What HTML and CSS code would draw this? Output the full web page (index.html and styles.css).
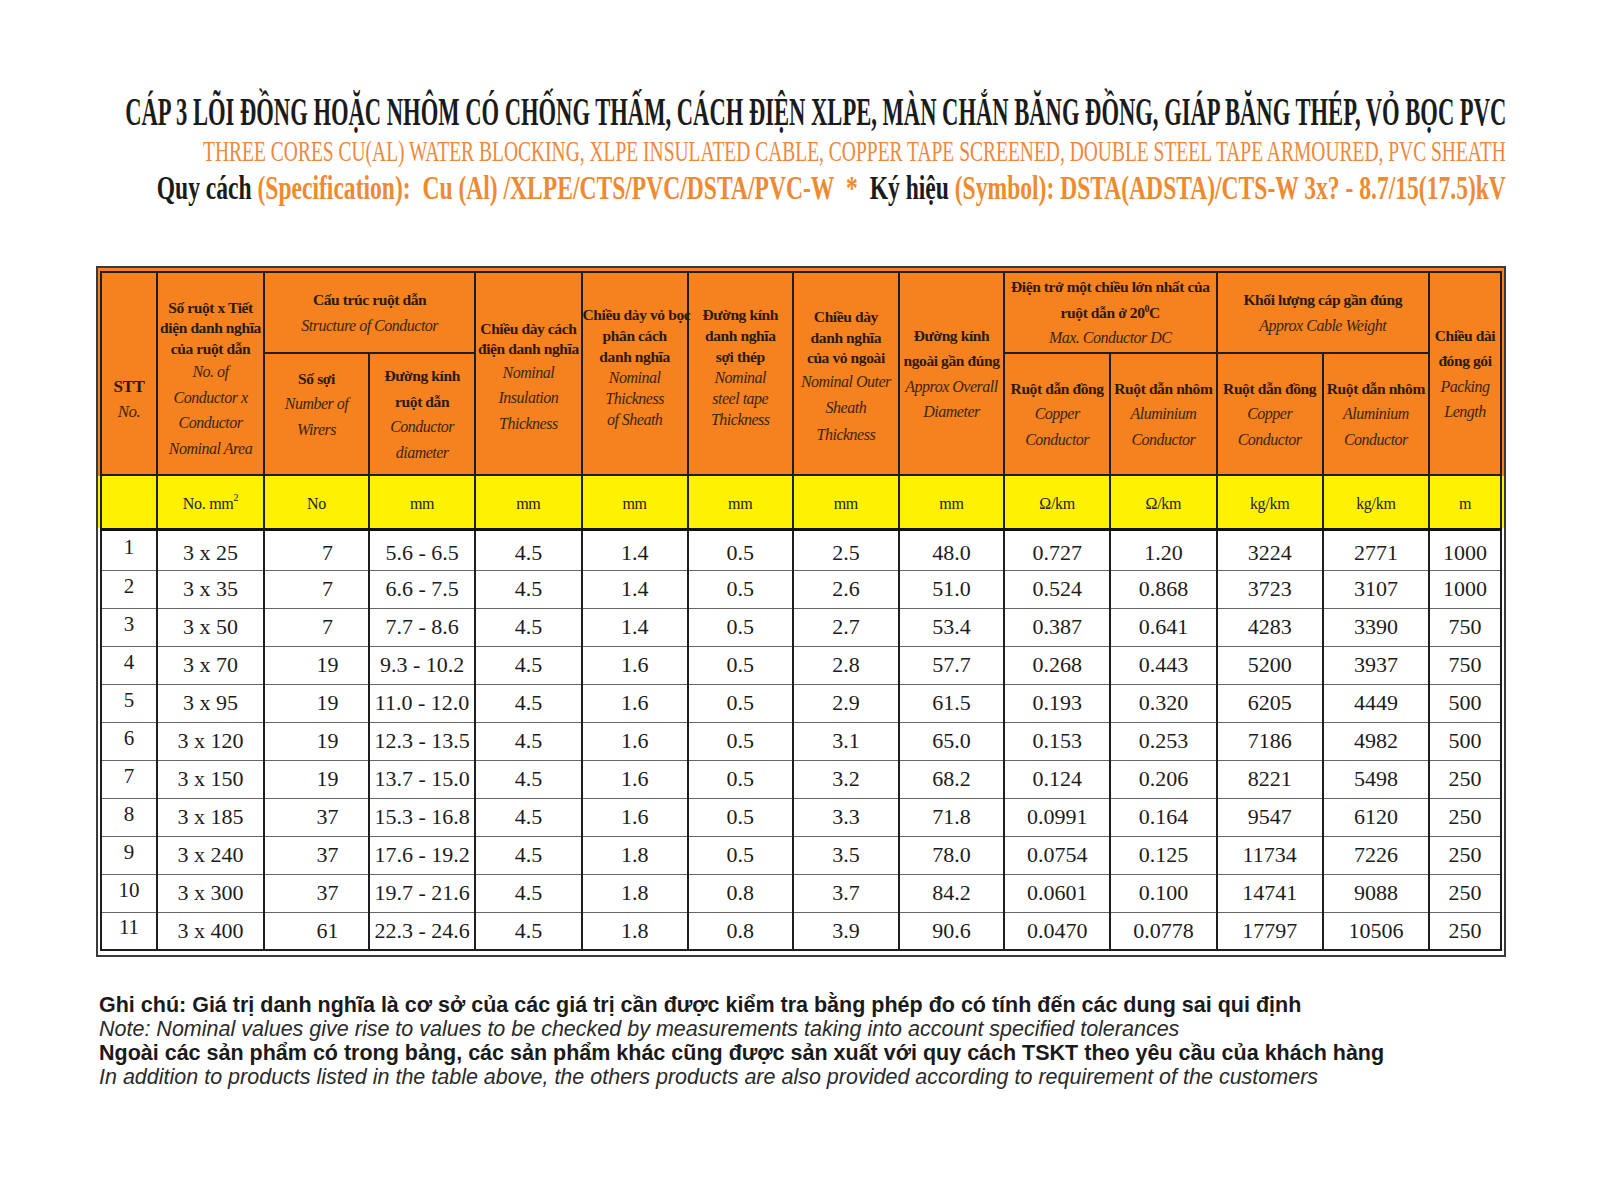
FILE: index.html
```html
<!DOCTYPE html>
<html lang="vi">
<head>
<meta charset="utf-8">
<title>Cáp 3 lõi DSTA/CTS-W</title>
<link rel="stylesheet" href="styles.css">
</head>
<body>
<div class="page">
  <header class="titles">
    <div class="tline t1"><span>CÁP 3 LÕI ĐỒNG HOẶC NHÔM CÓ CHỐNG THẤM, CÁCH ĐIỆN XLPE, MÀN CHẮN BĂNG ĐỒNG, GIÁP BĂNG THÉP, VỎ BỌC PVC</span></div>
    <div class="tline t2"><span>THREE CORES CU(AL) WATER BLOCKING, XLPE INSULATED CABLE, COPPER TAPE SCREENED, DOUBLE STEEL TAPE ARMOURED, PVC SHEATH</span></div>
    <div class="tline t3"><span>Quy cách <em>(Specification):&nbsp; Cu (Al) /XLPE/CTS/PVC/DSTA/PVC-W&nbsp; *&nbsp;</em> Ký hiệu <em>(Symbol): DSTA(ADSTA)/CTS-W 3x? - 8.7/15(17.5)kV</em></span></div>
  </header>

  <div class="frame">
    <table class="spec">
      <colgroup>
        <col class="c-stt"><col class="c-w107"><col class="c-w105"><col><col><col><col class="c-w105"><col><col class="c-w105"><col><col><col><col><col class="c-last">
      </colgroup>
      <thead>
        <tr class="h1">
          <th rowspan="2" class="stt"><b>STT</b><i>No.</i></th>
          <th rowspan="2" class="cb down12"><b>Số ruột x Tiết<br>diện danh nghĩa<br>của ruột dẫn</b><i>No. of<br>Conductor x<br>Conductor<br>Nominal Area</i></th>
          <th colspan="2"><b>Cấu trúc ruột dẫn</b><i>Structure of Conductor</i></th>
          <th rowspan="2" class="cb down8"><b>Chiều dày cách<br>điện danh nghĩa</b><i>Nominal<br>Insulation<br>Thickness</i></th>
          <th rowspan="2" class="tight"><b>Chiều dày vỏ bọc<br>phân cách<br>danh nghĩa</b><i>Nominal<br>Thickness<br>of Sheath</i></th>
          <th rowspan="2" class="tight"><b>Đường kính<br>danh nghĩa<br>sợi thép</b><i>Nominal<br>steel tape<br>Thickness</i></th>
          <th rowspan="2" class="cb wide down8"><b>Chiều dày<br>danh nghĩa<br>của vỏ ngoài</b><i>Nominal Outer<br>Sheath<br>Thickness</i></th>
          <th rowspan="2"><b>Đường kính<br>ngoài gần đúng</b><i>Approx Overall<br>Diameter</i></th>
          <th colspan="2"><b>Điện trở một chiều lớn nhất của<br>ruột dẫn ở 20<sup>0</sup>C</b><i>Max. Conductor DC</i></th>
          <th colspan="2"><b>Khối lượng cáp gần đúng</b><i>Approx Cable Weight</i></th>
          <th rowspan="2"><b>Chiều dài<br>đóng gói</b><i>Packing<br>Length</i></th>
        </tr>
        <tr class="h2">
          <th class="raise"><b>Số sợi</b><i>Number of<br>Wirers</i></th>
          <th><b>Đường kính<br>ruột dẫn</b><i>Conductor<br>diameter</i></th>
          <th><b>Ruột dẫn đồng</b><i>Copper<br>Conductor</i></th>
          <th><b>Ruột dẫn nhôm</b><i>Aluminium<br>Conductor</i></th>
          <th><b>Ruột dẫn đồng</b><i>Copper<br>Conductor</i></th>
          <th><b>Ruột dẫn nhôm</b><i>Aluminium<br>Conductor</i></th>
        </tr>
        <tr class="units">
          <td></td><td>No. mm<sup>2</sup></td><td>No</td><td>mm</td><td>mm</td><td>mm</td><td>mm</td><td>mm</td><td>mm</td><td>Ω/km</td><td>Ω/km</td><td>kg/km</td><td>kg/km</td><td>m</td>
        </tr>
      </thead>
      <tbody>
        <tr class="first"><td class="n">1</td><td>3 x 25</td><td class="w">7</td><td>5.6 - 6.5</td><td>4.5</td><td>1.4</td><td>0.5</td><td>2.5</td><td>48.0</td><td>0.727</td><td>1.20</td><td>3224</td><td>2771</td><td>1000</td></tr>
        <tr><td class="n">2</td><td>3 x 35</td><td class="w">7</td><td>6.6 - 7.5</td><td>4.5</td><td>1.4</td><td>0.5</td><td>2.6</td><td>51.0</td><td>0.524</td><td>0.868</td><td>3723</td><td>3107</td><td>1000</td></tr>
        <tr><td class="n">3</td><td>3 x 50</td><td class="w">7</td><td>7.7 - 8.6</td><td>4.5</td><td>1.4</td><td>0.5</td><td>2.7</td><td>53.4</td><td>0.387</td><td>0.641</td><td>4283</td><td>3390</td><td>750</td></tr>
        <tr><td class="n">4</td><td>3 x 70</td><td class="w">19</td><td>9.3 - 10.2</td><td>4.5</td><td>1.6</td><td>0.5</td><td>2.8</td><td>57.7</td><td>0.268</td><td>0.443</td><td>5200</td><td>3937</td><td>750</td></tr>
        <tr><td class="n">5</td><td>3 x 95</td><td class="w">19</td><td>11.0 - 12.0</td><td>4.5</td><td>1.6</td><td>0.5</td><td>2.9</td><td>61.5</td><td>0.193</td><td>0.320</td><td>6205</td><td>4449</td><td>500</td></tr>
        <tr><td class="n">6</td><td>3 x 120</td><td class="w">19</td><td>12.3 - 13.5</td><td>4.5</td><td>1.6</td><td>0.5</td><td>3.1</td><td>65.0</td><td>0.153</td><td>0.253</td><td>7186</td><td>4982</td><td>500</td></tr>
        <tr><td class="n">7</td><td>3 x 150</td><td class="w">19</td><td>13.7 - 15.0</td><td>4.5</td><td>1.6</td><td>0.5</td><td>3.2</td><td>68.2</td><td>0.124</td><td>0.206</td><td>8221</td><td>5498</td><td>250</td></tr>
        <tr><td class="n">8</td><td>3 x 185</td><td class="w">37</td><td>15.3 - 16.8</td><td>4.5</td><td>1.6</td><td>0.5</td><td>3.3</td><td>71.8</td><td>0.0991</td><td>0.164</td><td>9547</td><td>6120</td><td>250</td></tr>
        <tr><td class="n">9</td><td>3 x 240</td><td class="w">37</td><td>17.6 - 19.2</td><td>4.5</td><td>1.8</td><td>0.5</td><td>3.5</td><td>78.0</td><td>0.0754</td><td>0.125</td><td>11734</td><td>7226</td><td>250</td></tr>
        <tr><td class="n">10</td><td>3 x 300</td><td class="w">37</td><td>19.7 - 21.6</td><td>4.5</td><td>1.8</td><td>0.8</td><td>3.7</td><td>84.2</td><td>0.0601</td><td>0.100</td><td>14741</td><td>9088</td><td>250</td></tr>
        <tr><td class="n">11</td><td>3 x 400</td><td class="w">61</td><td>22.3 - 24.6</td><td>4.5</td><td>1.8</td><td>0.8</td><td>3.9</td><td>90.6</td><td>0.0470</td><td>0.0778</td><td>17797</td><td>10506</td><td>250</td></tr>
      </tbody>
    </table>
  </div>

  <footer class="notes">
    <p class="vi">Ghi chú: Giá trị danh nghĩa là cơ sở của các giá trị cần được kiểm tra bằng phép đo có tính đến các dung sai qui định</p>
    <p class="en">Note: Nominal values give rise to values to be checked by measurements taking into account specified tolerances</p>
    <p class="vi">Ngoài các sản phẩm có trong bảng, các sản phẩm khác cũng được sản xuất với quy cách TSKT theo yêu cầu của khách hàng</p>
    <p class="en">In addition to products listed in the table above, the others products are also provided according to requirement of the customers</p>
  </footer>
</div>
</body>
</html>
```
FILE: styles.css
```css
* { box-sizing: border-box; }
html, body { margin: 0; padding: 0; background: #fff; }
body { font-family: "Liberation Serif", "Times New Roman", serif; color: #1a1a1a; }

.page { width: 1600px; }

/* ---------- titles ---------- */
.titles { padding-top: 90px; width: 1506px; }
.tline { display: flex; justify-content: flex-end; white-space: nowrap; }
.tline span { flex: none; display: block; transform-origin: right center; }
.t1 { font-size: 39px; line-height: 44px; font-weight: 700; color: #1b1b1b; }
.t1 span { transform: scaleX(0.579); }
.t2 { font-size: 29.5px; line-height: 34px; font-weight: 400; color: #f0873a; }
.t2 span { transform: scaleX(0.661); }
.t3 { font-size: 34px; line-height: 39px; font-weight: 700; color: #1b1b1b; }
.t3 span { transform: scaleX(0.693); }
.t3 em { font-style: normal; color: #ef8a30; }

/* ---------- table frame ---------- */
.frame {
  margin: 59px 0 0 96px;
  width: 1410px;
  border: 2px solid #3a3a3a;
  padding: 3px 2px 4px;
  background: linear-gradient(#f5821f 0, #f5821f 208px, #fff200 208px, #fff200 260px, #fff 260px);
}
.spec {
  width: 1402px;
  table-layout: fixed;
  border-collapse: collapse;
  border: 2px solid #1e1e1e;
}
.c-stt { width: 56px; }
.c-w107 { width: 107px; }
.c-w105 { width: 105px; }
.c-last { width: 72px; }

.spec th, .spec td {
  border: 2px solid #1e1e1e;
  padding: 0;
  text-align: center;
  vertical-align: middle;
  white-space: nowrap;
}

/* header */
.spec thead th { background: #f5821f; color: #2a1a0c; }
.spec th b {
  display: block;
  font-weight: 700;
  font-size: 15.5px;
  line-height: 25.5px;
  letter-spacing: -0.4px;
  color: #2b1a0c;
}
.spec th i {
  display: block;
  font-style: italic;
  font-weight: 400;
  font-size: 16px;
  line-height: 25.5px;
  letter-spacing: -0.5px;
  color: #3a2614;
}
.spec th.cb b { line-height: 20.5px; }
.spec th.wide i { line-height: 26.5px; }
.spec th.tight b,
.spec th.tight i { line-height: 21px; }
.spec th.tight { padding-bottom: 14px; }
.spec th.down12 { padding-top: 12px; }
.spec th.down8 { padding-top: 8px; }
.spec th sup { font-size: 10px; line-height: 0; vertical-align: 6px; }
.h1 th { height: 81px; }
.h2 th { height: 122px; }
.spec th.stt { padding-top: 52px; }
.spec th.stt b { font-size: 17px; line-height: 25px; }
.spec th.stt i { font-size: 17px; }
.spec th.raise { padding-bottom: 20px; }

/* units row */
.units td {
  background: #fff200;
  height: 54px;
  padding-top: 4px;
  font-size: 16px;
  letter-spacing: -0.3px;
  color: #222;
  border-bottom: 3px solid #111;
}
.units sup { font-size: 10px; line-height: 0; vertical-align: 8px; }

/* body */
.spec tbody td {
  height: 38px;
  font-size: 22px;
  color: #1c1c1c;
  border-top: 1px solid #666;
  border-bottom: 1px solid #666;
  background: #fff;
}
.spec tbody tr.first td { height: 41px; padding-top: 5px; }
.spec tbody td.n { padding-bottom: 6px; font-size: 21px; }
.spec tbody tr.first td.n { padding-top: 0; }
.spec tbody td.w { padding-left: 22px; }

/* ---------- notes ---------- */
.notes {
  margin: 36px 0 0 99px;
  font-family: "Liberation Sans", Arial, sans-serif;
  font-size: 21.5px;
  line-height: 24px;
}
.notes p { margin: 0; white-space: nowrap; }
.notes .vi { font-weight: 700; color: #1a1a1a; }
.notes .en { font-style: italic; color: #2a2a2a; }
```
